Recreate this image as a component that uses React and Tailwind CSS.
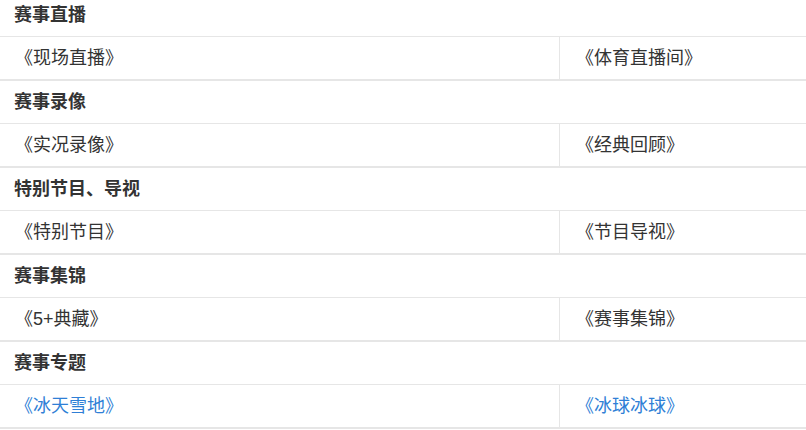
const sections = [
  { title: '赛事直播', left: '《现场直播》', right: '《体育直播间》' },
  { title: '赛事录像', left: '《实况录像》', right: '《经典回顾》' },
  { title: '特别节目、导视', left: '《特别节目》', right: '《节目导视》' },
  { title: '赛事集锦', left: '《5+典藏》', right: '《赛事集锦》' },
  { title: '赛事专题', left: '《冰天雪地》', right: '《冰球冰球》', blue: true },
]

const font = { fontFamily: '"Liberation Sans", "Noto Sans CJK SC", sans-serif' }

export default function App() {
  return (
    <div className="-mt-[6px] w-[806px] bg-white" style={font}>
      {sections.map((s) => (
        <div key={s.title}>
          <div className="flex h-[43px] items-center border-b border-[#e6e6e6] px-[14px] text-[18px] font-bold text-[#333]">
            {s.title}
          </div>
          <div
            className={`grid h-[44px] grid-cols-[560px_1fr] border-b-2 border-[#e6e6e6] text-[18px] ${
              s.blue ? 'text-[#2f7fd6]' : 'text-[#333]'
            }`}
          >
            <div className="flex items-center border-r border-[#e6e6e6] pl-[15px]">{s.left}</div>
            <div className="flex items-center pl-[16px]">{s.right}</div>
          </div>
        </div>
      ))}
    </div>
  )
}
